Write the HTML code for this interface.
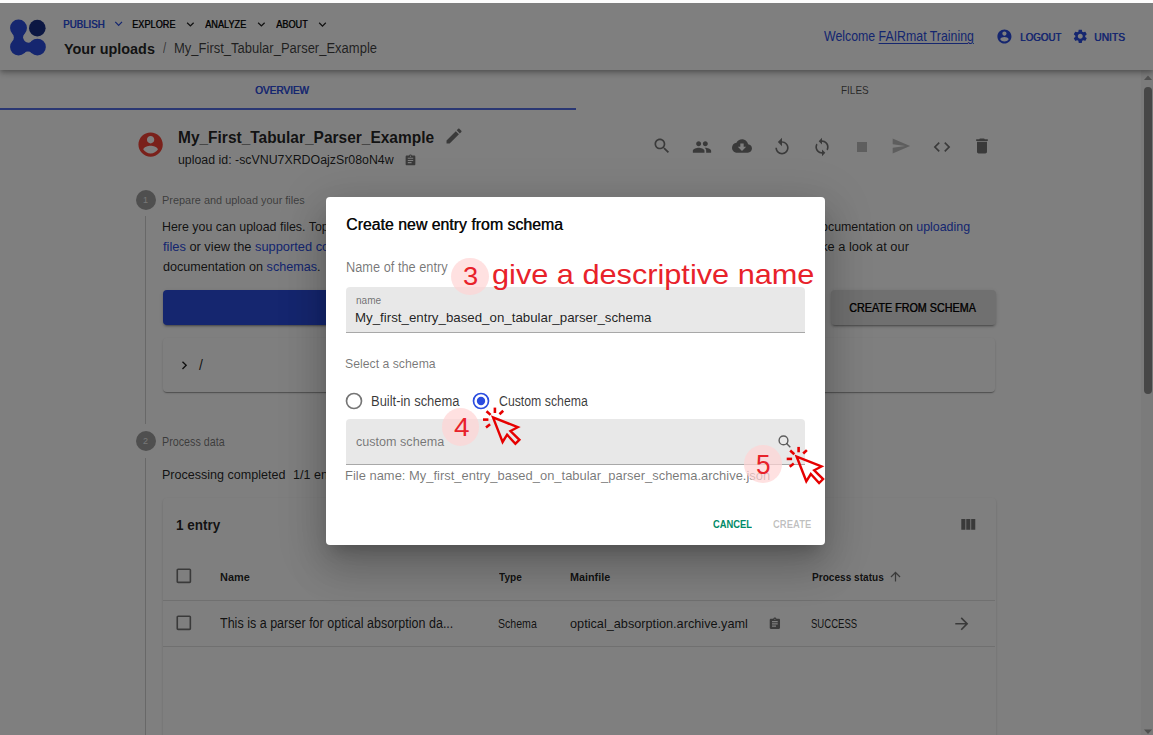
<!DOCTYPE html>
<html><head><meta charset="utf-8"><style>
html,body{margin:0;padding:0}
body{width:1153px;height:735px;overflow:hidden;position:relative;background:#fff;font-family:"Liberation Sans",sans-serif}
.t{position:absolute;white-space:nowrap;line-height:1;transform-origin:0 0}
.t a{color:#2A4CDF;text-decoration:none}
.t u{text-decoration:underline;text-underline-offset:1.5px;text-decoration-thickness:1px}
.r{position:absolute}
.ic{position:absolute;overflow:visible}
#hdr{position:absolute;left:0;top:0;width:1153px;height:70px;background:#fff;box-shadow:0px 2px 4px -1px rgba(0,0,0,0.2),0px 4px 5px 0px rgba(0,0,0,0.14),0px 1px 10px 0px rgba(0,0,0,0.12);z-index:1}
#hdr ~ *{z-index:2}
.stc{position:absolute;width:20px;height:20px;border-radius:50%;background:rgba(0,0,0,0.38);color:rgba(255,255,255,0.85);font-size:9px;line-height:21px;text-align:center}
.btn{border-radius:4px;box-shadow:0px 3px 1px -2px rgba(0,0,0,0.2),0px 2px 2px 0px rgba(0,0,0,0.14),0px 1px 5px 0px rgba(0,0,0,0.12)}
.paper{background:#fff;border-radius:4px;box-shadow:0px 2px 1px -1px rgba(0,0,0,0.2),0px 1px 1px 0px rgba(0,0,0,0.14),0px 1px 3px 0px rgba(0,0,0,0.12)}
#ov{position:absolute;left:0;top:0;width:1153px;height:735px;background:rgba(0,0,0,0.5);z-index:10}
#top{position:absolute;left:0;top:0;width:1153px;height:3px;background:#fcfcfc;z-index:11}
#modal{position:absolute;left:326px;top:197px;width:499px;height:348px;background:#fff;border-radius:4px;z-index:20;box-shadow:0px 11px 15px -7px rgba(0,0,0,0.2),0px 24px 38px 3px rgba(0,0,0,0.14),0px 9px 46px 8px rgba(0,0,0,0.12)}
.fld{position:absolute;background:rgba(0,0,0,0.09);border-top-left-radius:4px;border-top-right-radius:4px;box-sizing:border-box;border-bottom:1px solid rgba(0,0,0,0.28)}
#mt{}
.sb{position:absolute;z-index:12}
#ann{position:absolute;left:0;top:0;width:1153px;height:735px;z-index:30}
#ann > *{position:absolute}
</style></head><body>
<div id="page">
<div id="hdr"></div>
<svg class="ic" style="left:0;top:0;width:60px;height:70px" viewBox="0 0 60 70">
<rect x="12.3" y="33.7" width="12.4" height="7.7" fill="#2A4CDF"/>
<rect x="23.5" y="41.2" width="8.5" height="12" fill="#2A4CDF"/>
<circle cx="8.22" cy="37.55" r="5.63" fill="#fff"/>
<circle cx="28.5" cy="37.3" r="5.4" fill="#fff"/>
<circle cx="27.95" cy="56.6" r="5.0" fill="#fff"/>
<circle cx="18.5" cy="28" r="8.45" fill="#2A4CDF"/>
<circle cx="18.5" cy="47.1" r="8.45" fill="#2A4CDF"/>
<circle cx="37.4" cy="47.1" r="8.45" fill="#2A4CDF"/>
<circle cx="37.3" cy="28.15" r="8.3" fill="#192E86"/>
</svg>
<svg class="ic" style="left:111.11px;top:16.48px;width:15.27px;height:15.27px" viewBox="0 0 24 24"><path fill="#2A4CDF" d="M16.59 8.59L12 13.17 7.41 8.59 6 10l6 6 6-6z"/></svg>
<svg class="ic" style="left:183.11px;top:16.73px;width:14.77px;height:14.77px" viewBox="0 0 24 24"><path fill="rgba(0,0,0,0.87)" d="M16.59 8.59L12 13.17 7.41 8.59 6 10l6 6 6-6z"/></svg>
<svg class="ic" style="left:254.11px;top:16.73px;width:14.77px;height:14.77px" viewBox="0 0 24 24"><path fill="rgba(0,0,0,0.87)" d="M16.59 8.59L12 13.17 7.41 8.59 6 10l6 6 6-6z"/></svg>
<svg class="ic" style="left:314.71px;top:16.63px;width:14.97px;height:14.97px" viewBox="0 0 24 24"><path fill="rgba(0,0,0,0.87)" d="M16.59 8.59L12 13.17 7.41 8.59 6 10l6 6 6-6z"/></svg>
<svg class="ic" style="left:996.47px;top:28.02px;width:16.86px;height:16.86px" viewBox="0 0 24 24"><path fill="#2A4CDF" d="M12 2C6.48 2 2 6.48 2 12s4.48 10 10 10 10-4.48 10-10S17.52 2 12 2zm0 3c1.66 0 3 1.34 3 3s-1.34 3-3 3-3-1.34-3-3 1.34-3 3-3zm0 14.2c-2.5 0-4.71-1.28-6-3.22.03-1.99 4-3.08 6-3.08 1.99 0 5.97 1.09 6 3.08-1.29 1.94-3.5 3.22-6 3.22z"/></svg>
<svg class="ic" style="left:1071.67px;top:28.17px;width:16.56px;height:16.56px" viewBox="0 0 24 24"><path fill="#2A4CDF" d="M19.14 12.94c.04-.3.06-.61.06-.94 0-.32-.02-.64-.07-.94l2.03-1.58c.18-.14.23-.41.12-.61l-1.92-3.32c-.12-.22-.37-.29-.59-.22l-2.39.96c-.5-.38-1.03-.7-1.62-.94l-.36-2.54c-.04-.24-.24-.41-.48-.41h-3.84c-.24 0-.43.17-.47.41l-.36 2.54c-.59.24-1.13.57-1.62.94l-2.39-.96c-.22-.08-.47 0-.59.22L2.74 8.87c-.12.21-.08.47.12.61l2.03 1.58c-.05.3-.09.63-.09.94s.02.64.07.94l-2.03 1.58c-.18.14-.23.41-.12.61l1.92 3.32c.12.22.37.29.59.22l2.39-.96c.5.38 1.030.7 1.62.94l.36 2.54c.05.24.24.41.48.41h3.84c.24 0 .44-.17.47-.41l.36-2.54c.59-.24 1.13-.56 1.62-.94l2.39.96c.22.08.47 0 .59-.22l1.92-3.32c.12-.22.07-.47-.12-.61l-2.01-1.58zM12 15.6c-1.98 0-3.6-1.62-3.6-3.6s1.62-3.6 3.6-3.6 3.6 1.62 3.6 3.6-1.62 3.6-3.6 3.6z"/></svg>
<div class="r" style="left:0;top:108px;width:576px;height:2px;background:#546EE6"></div>
<svg class="ic" style="left:136.09px;top:130.04px;width:29.22px;height:29.22px" viewBox="0 0 24 24"><path fill="#f44336" d="M12 2C6.48 2 2 6.48 2 12s4.48 10 10 10 10-4.48 10-10S17.52 2 12 2zm0 3c1.66 0 3 1.34 3 3s-1.34 3-3 3-3-1.34-3-3 1.34-3 3-3zm0 14.2c-2.5 0-4.71-1.28-6-3.22.03-1.99 4-3.08 6-3.08 1.99 0 5.97 1.09 6 3.08-1.29 1.94-3.5 3.22-6 3.22z"/></svg>
<svg class="ic" style="left:443.53px;top:126.03px;width:20.13px;height:20.13px" viewBox="0 0 24 24"><path fill="rgba(0,0,0,0.54)" d="M3 17.25V21h3.75L17.81 9.94l-3.75-3.75L3 17.25zM20.71 7.04c.39-.39.39-1.02 0-1.41l-2.34-2.34c-.39-.39-1.02-.39-1.41 0l-1.83 1.83 3.75 3.75 1.83-1.83z"/></svg>
<svg class="ic" style="left:403.52px;top:153.51px;width:12.97px;height:12.97px" viewBox="0 0 24 24"><path fill="rgba(0,0,0,0.54)" d="M19 3h-4.18C14.4 1.84 13.3 1 12 1c-1.3 0-2.4.84-2.82 2H5c-1.1 0-2 .9-2 2v14c0 1.1.9 2 2 2h14c1.1 0 2-.9 2-2V5c0-1.1-.9-2-2-2zm-7 0c.55 0 1 .45 1 1s-.45 1-1 1-1-.45-1-1 .45-1 1-1zm2 14H7v-2h7v2zm3-4H7v-2h10v2zm0-4H7V7h10v2z"/></svg>
<svg class="ic" style="left:651.72px;top:136.32px;width:19.99px;height:19.99px" viewBox="0 0 24 24"><path fill="rgba(0,0,0,0.54)" d="M15.5 14h-.79l-.28-.27C15.41 12.59 16 11.11 16 9.5 16 5.91 13.09 3 9.5 3S3 5.91 3 9.5 5.91 16 9.5 16c1.61 0 3.09-.59 4.23-1.57l.27.28v.79l5 4.99L20.49 19l-4.99-5zm-6 0C7.01 14 5 11.99 5 9.5S7.01 5 9.5 5 14 7.01 14 9.5 11.99 14 9.5 14z"/></svg>
<svg class="ic" style="left:692.05px;top:136.50px;width:19.99px;height:19.99px" viewBox="0 0 24 24"><path fill="rgba(0,0,0,0.54)" d="M16 11c1.66 0 2.99-1.34 2.99-3S17.66 5 16 5c-1.66 0-3 1.34-3 3s1.34 3 3 3zm-8 0c1.66 0 2.99-1.34 2.99-3S9.66 5 8 5C6.34 5 5 6.34 5 8s1.34 3 3 3zm0 2c-2.33 0-7 1.17-7 3.5V19h14v-2.5c0-2.330-4.67-3.5-7-3.5zm8 0c-.29 0-.62.02-.97.05 1.16.84 1.97 1.97 1.97 3.45V19h6v-2.5c0-2.33-4.67-3.5-7-3.5z"/></svg>
<svg class="ic" style="left:732.10px;top:136.45px;width:19.99px;height:19.99px" viewBox="0 0 24 24"><path fill="rgba(0,0,0,0.54)" d="M19.35 10.04C18.67 6.59 15.64 4 12 4 9.11 4 6.6 5.64 5.35 8.04 2.34 8.36 0 10.91 0 14c0 3.31 2.69 6 6 6h13c2.76 0 5-2.24 5-5 0-2.64-2.05-4.78-4.65-4.96zM17 13l-5 5-5-5h3V9h4v4h3z"/></svg>
<svg class="ic" style="left:771.85px;top:136.69px;width:19.99px;height:19.99px" viewBox="0 0 24 24"><path fill="rgba(0,0,0,0.54)" d="M12 5V1L7 6l5 5V7c3.31 0 6 2.69 6 6s-2.69 6-6 6-6-2.69-6-6H4c0 4.42 3.58 8 8 8s8-3.58 8-8-3.58-8-8-8z"/></svg>
<svg class="ic" style="left:812.05px;top:136.75px;width:19.99px;height:19.99px" viewBox="0 0 24 24"><path fill="rgba(0,0,0,0.54)" d="M12 4V1L8 5l4 4V6c3.31 0 6 2.69 6 6 0 1.01-.25 1.97-.7 2.8l1.46 1.46C19.54 15.03 20 13.57 20 12c0-4.42-3.58-8-8-8zm0 14c-3.31 0-6-2.690-6-6 0-1.010.25-1.97.7-2.8L5.24 7.74C4.46 8.97 4 10.43 4 12c0 4.42 3.58 8 8 8v3l4-4-4-4v3z"/></svg>
<svg class="ic" style="left:852.00px;top:136.55px;width:19.99px;height:19.99px" viewBox="0 0 24 24"><path fill="rgba(0,0,0,0.26)" d="M6 6h12v12H6z"/></svg>
<svg class="ic" style="left:891.19px;top:136.05px;width:19.99px;height:19.99px" viewBox="0 0 24 24"><path fill="rgba(0,0,0,0.26)" d="M2.01 21L23 12 2.01 3 2 10l15 2-15 2z"/></svg>
<svg class="ic" style="left:932.00px;top:136.50px;width:19.99px;height:19.99px" viewBox="0 0 24 24"><path fill="rgba(0,0,0,0.54)" d="M9.4 16.6L4.8 12l4.6-4.6L8 6l-6 6 6 6 1.4-1.4zm5.2 0l4.6-4.6-4.6-4.6L16 6l6 6-6 6-1.4-1.4z"/></svg>
<svg class="ic" style="left:971.70px;top:136.25px;width:19.99px;height:19.99px" viewBox="0 0 24 24"><path fill="rgba(0,0,0,0.54)" d="M6 19c0 1.1.9 2 2 2h8c1.1 0 2-.9 2-2V7H6v12zM19 4h-3.5l-1-1h-5l-1 1H5v2h14V4z"/></svg>
<div class="r" style="left:145px;top:216px;width:1px;height:208px;background:#d0d0d0"></div>
<div class="r" style="left:145px;top:458px;width:1px;height:300px;background:#d0d0d0"></div>
<div class="stc" style="left:135.5px;top:189.9px">1</div>
<div class="stc" style="left:135.5px;top:431.1px">2</div>
<div class="r btn" style="left:163px;top:290px;width:659px;height:35px;background:#2A4CDF"></div>
<div class="r btn" style="left:830.5px;top:290px;width:165px;height:35px;background:#e0e0e0"></div>
<div class="r paper" style="left:163px;top:338px;width:832px;height:54px"></div>
<svg class="ic" style="left:175.72px;top:356.63px;width:16.74px;height:16.74px" viewBox="0 0 24 24"><path fill="rgba(0,0,0,0.87)" d="M10 6L8.59 7.41 13.17 12l-4.58 4.59L10 18l6-6z"/></svg>
<div class="t" style="left:199px;top:357.6px;font-size:14px;color:rgba(0,0,0,0.87)">/</div>
<div class="r paper" style="left:163px;top:498px;width:832.5px;height:300px"></div>
<svg class="ic" style="left:958.41px;top:514.93px;width:19.76px;height:19.76px" viewBox="0 0 24 24"><path fill="rgba(0,0,0,0.54)" d="M10 18h5V5h-5v13zm-6 0h5V5H4v13zM16 5v13h5V5h-5z"/></svg>
<svg class="ic" style="left:173.52px;top:565.97px;width:19.67px;height:19.67px" viewBox="0 0 24 24"><path fill="rgba(0,0,0,0.54)" d="M19 5v14H5V5h14m0-2H5c-1.1 0-2 .9-2 2v14c0 1.1.9 2 2 2h14c1.1 0 2-.9 2-2V5c0-1.1-.9-2-2-2z"/></svg>
<svg class="ic" style="left:173.55px;top:613.35px;width:19.60px;height:19.60px" viewBox="0 0 24 24"><path fill="rgba(0,0,0,0.54)" d="M19 5v14H5V5h14m0-2H5c-1.1 0-2 .9-2 2v14c0 1.1.9 2 2 2h14c1.1 0 2-.9 2-2V5c0-1.1-.9-2-2-2z"/></svg>
<svg class="ic" style="left:887.80px;top:569.30px;width:15.00px;height:15.00px" viewBox="0 0 24 24"><path fill="rgba(0,0,0,0.54)" d="M4 12l1.41 1.41L11 7.83V20h2V7.83l5.58 5.59L20 12l-8-8-8 8z"/></svg>
<svg class="ic" style="left:767.93px;top:617.15px;width:13.74px;height:13.74px" viewBox="0 0 24 24"><path fill="rgba(0,0,0,0.54)" d="M19 3h-4.18C14.4 1.84 13.3 1 12 1c-1.3 0-2.4.84-2.82 2H5c-1.1 0-2 .9-2 2v14c0 1.1.9 2 2 2h14c1.1 0 2-.9 2-2V5c0-1.1-.9-2-2-2zm-7 0c.55 0 1 .45 1 1s-.45 1-1 1-1-.45-1-1 .45-1 1-1zm2 14H7v-2h7v2zm3-4H7v-2h10v2zm0-4H7V7h10v2z"/></svg>
<svg class="ic" style="left:951.61px;top:613.86px;width:19.58px;height:19.58px" viewBox="0 0 24 24"><path fill="rgba(0,0,0,0.54)" d="M12 4l-1.41 1.41L16.17 11H4v2h12.17l-5.58 5.59L12 20l8-8z"/></svg>
<div class="r" style="left:163px;top:600px;width:832px;height:1px;background:#e0e0e0"></div>
<div class="r" style="left:163px;top:646px;width:832px;height:1px;background:#e0e0e0"></div>
<div class="t" id="nav1" style="left:62.90px;top:18.68px;font-size:10.72px;font-weight:normal;color:#2A4CDF;text-shadow:0.6px 0 0 #2A4CDF;transform:scaleX(0.9022)">PUBLISH</div>
<div class="t" id="nav2" style="left:132.45px;top:18.68px;font-size:10.72px;font-weight:normal;color:rgba(0,0,0,0.87);text-shadow:0.6px 0 0 rgba(0,0,0,0.87);transform:scaleX(0.8540)">EXPLORE</div>
<div class="t" id="nav3" style="left:205.00px;top:18.68px;font-size:10.72px;font-weight:normal;color:rgba(0,0,0,0.87);text-shadow:0.6px 0 0 rgba(0,0,0,0.87);transform:scaleX(0.8531)">ANALYZE</div>
<div class="t" id="nav4" style="left:275.50px;top:18.68px;font-size:10.72px;font-weight:normal;color:rgba(0,0,0,0.87);text-shadow:0.6px 0 0 rgba(0,0,0,0.87);transform:scaleX(0.8553)">ABOUT</div>
<div class="t" id="yu" style="left:64.40px;top:40.79px;font-size:15.07px;font-weight:bold;color:rgba(0,0,0,0.87);transform:scaleX(0.9558)">Your uploads</div>
<div class="t" id="sl" style="left:162.90px;top:42.27px;font-size:13.91px;font-weight:normal;color:rgba(0,0,0,0.6);transform:scaleX(0.8250)">/</div>
<div class="t" id="bc" style="left:173.67px;top:41.97px;font-size:13.91px;font-weight:normal;color:rgba(0,0,0,0.75);transform:scaleX(0.9347)">My_First_Tabular_Parser_Example</div>
<div class="t" id="wel" style="left:823.60px;top:28.83px;font-size:14.20px;font-weight:normal;color:#2A4CDF;transform:scaleX(0.8692)">Welcome <u>FAIRmat Training</u></div>
<div class="t" id="lo" style="left:1019.70px;top:31.96px;font-size:10.87px;font-weight:normal;color:#2A4CDF;text-shadow:0.6px 0 0 #2A4CDF;transform:scaleX(0.8978)">LOGOUT</div>
<div class="t" id="un" style="left:1094.46px;top:31.96px;font-size:10.87px;font-weight:normal;color:#2A4CDF;text-shadow:0.6px 0 0 #2A4CDF;transform:scaleX(0.9437)">UNITS</div>
<div class="t" id="tab1" style="left:255.30px;top:84.94px;font-size:11.59px;font-weight:normal;color:#2A4CDF;text-shadow:0.6px 0 0 #2A4CDF;transform:scaleX(0.8651)">OVERVIEW</div>
<div class="t" id="tab2" style="left:840.82px;top:84.99px;font-size:11.30px;font-weight:normal;color:rgba(0,0,0,0.7);transform:scaleX(0.8833)">FILES</div>
<div class="t" id="ttl" style="left:177.84px;top:129.33px;font-size:16.09px;font-weight:bold;color:rgba(0,0,0,0.87);transform:scaleX(0.9626)">My_First_Tabular_Parser_Example</div>
<div class="t" id="uid" style="left:177.87px;top:153.11px;font-size:13.29px;font-weight:normal;color:rgba(0,0,0,0.87);transform:scaleX(0.9303)">upload id: -scVNU7XRDOajzSr08oN4w</div>
<div class="t" id="s1" style="left:161.58px;top:194.58px;font-size:10.72px;font-weight:normal;color:rgba(0,0,0,0.54);transform:scaleX(1.0194)">Prepare and upload your files</div>
<div class="t" id="b1" style="left:161.65px;top:219.91px;font-size:13.04px;font-weight:normal;color:rgba(0,0,0,0.87);transform:scaleX(0.9523)">Here you can upload files. Top-level .zip or .tar files will be extracted</div>
<div class="t" id="b1r" style="left:761.45px;top:219.91px;font-size:13.04px;font-weight:normal;color:rgba(0,0,0,0.87);transform:scaleX(0.9523)">. See the documentation on <a>uploading</a></div>
<div class="t" id="b2" style="left:162.60px;top:240.85px;font-size:12.88px;font-weight:normal;color:rgba(0,0,0,0.87);transform:scaleX(0.9966)"><a>files</a> or view the <a>supported codes</a>. Or create entries</div>
<div class="t" id="b2r" style="left:558.20px;top:240.85px;font-size:12.88px;font-weight:normal;color:rgba(0,0,0,0.87);transform:scaleX(0.9966)">You can also create entries from a schema. Take a look at our</div>
<div class="t" id="b3" style="left:162.60px;top:259.67px;font-size:13.56px;font-weight:normal;color:rgba(0,0,0,0.87);transform:scaleX(0.9296)">documentation on <a>schemas</a>.</div>
<div class="t" id="cfs" style="left:849.40px;top:301.61px;font-size:12.46px;font-weight:normal;color:rgba(0,0,0,0.87);text-shadow:0.6px 0 0 rgba(0,0,0,0.87);transform:scaleX(0.8646)">CREATE FROM SCHEMA</div>
<div class="t" id="s2" style="left:161.70px;top:436.70px;font-size:11.88px;font-weight:normal;color:rgba(0,0,0,0.54);transform:scaleX(0.9043)">Process data</div>
<div class="t" id="pc" style="left:161.64px;top:467.71px;font-size:13.04px;font-weight:normal;color:rgba(0,0,0,0.87);transform:scaleX(0.9630)">Processing completed</div>
<div class="t" id="pc2" style="left:293.04px;top:467.71px;font-size:13.04px;font-weight:normal;color:rgba(0,0,0,0.87);transform:scaleX(0.9630)">1/1 entries processed</div>
<div class="t" id="ent" style="left:176.11px;top:516.67px;font-size:15.22px;font-weight:bold;color:rgba(0,0,0,0.87);transform:scaleX(0.8878)">1 entry</div>
<div class="t" id="thn" style="left:219.80px;top:571.74px;font-size:11.59px;font-weight:bold;color:rgba(0,0,0,0.87);transform:scaleX(0.9419)">Name</div>
<div class="t" id="tht" style="left:499.00px;top:571.74px;font-size:11.59px;font-weight:bold;color:rgba(0,0,0,0.87);transform:scaleX(0.8692)">Type</div>
<div class="t" id="thm" style="left:569.70px;top:571.74px;font-size:11.59px;font-weight:bold;color:rgba(0,0,0,0.87);transform:scaleX(0.9326)">Mainfile</div>
<div class="t" id="thp" style="left:811.50px;top:571.74px;font-size:11.59px;font-weight:bold;color:rgba(0,0,0,0.87);transform:scaleX(0.8720)">Process status</div>
<div class="t" id="r1" style="left:219.80px;top:615.56px;font-size:14.64px;font-weight:normal;color:rgba(0,0,0,0.87);transform:scaleX(0.8568)">This is a parser for optical absorption da...</div>
<div class="t" id="r2" style="left:498.11px;top:618.70px;font-size:11.88px;font-weight:normal;color:rgba(0,0,0,0.87);transform:scaleX(0.8907)">Schema</div>
<div class="t" id="r3" style="left:569.70px;top:616.94px;font-size:13.01px;font-weight:normal;color:rgba(0,0,0,0.87);transform:scaleX(0.9769)">optical_absorption.archive.yaml</div>
<div class="t" id="r4" style="left:810.70px;top:618.70px;font-size:11.88px;font-weight:normal;color:rgba(0,0,0,0.87);transform:scaleX(0.8036)">SUCCESS</div>
</div>
<div id="ov"></div>
<div id="top"></div>
<div class="sb" style="left:1141px;top:70px;width:12px;height:665px;background:rgba(0,0,0,0.03)"></div>
<svg class="sb" style="left:1143px;top:74px;width:10px;height:7px" viewBox="0 0 10 7"><path d="M1 6L5 1.5L9 6Z" fill="#505050"/></svg>
<div class="sb" style="left:1144px;top:86.5px;width:8px;height:307px;border-radius:4px;background:#474747"></div>
<svg class="sb" style="left:1143px;top:728px;width:10px;height:7px" viewBox="0 0 10 7"><path d="M1 1.5L5 6L9 1.5Z" fill="#505050"/></svg>
<div id="modal">
<div class="fld" style="left:20px;top:90px;width:459.4px;height:45.5px"></div>
<div class="fld" style="left:19.7px;top:221.5px;width:459.5px;height:46px"></div>
<svg class="ic" style="left:18px;top:193.7px;width:20px;height:20px" viewBox="0 0 24 24"><circle cx="12" cy="12" r="9" fill="none" stroke="rgba(0,0,0,0.54)" stroke-width="2"/></svg>
<svg class="ic" style="left:145px;top:193.7px;width:20px;height:20px" viewBox="0 0 24 24"><circle cx="12" cy="12" r="9" fill="none" stroke="#2A4CDF" stroke-width="2"/><circle cx="12" cy="12" r="5" fill="#2A4CDF"/></svg>
<svg class="ic" style="left:450px;top:236px;width:20px;height:20px" viewBox="0 0 20 20"><circle cx="7.5" cy="7.4" r="4.4" fill="none" stroke="rgba(0,0,0,0.6)" stroke-width="1.4"/><path d="M10.6 10.6L14.3 14.3" stroke="rgba(0,0,0,0.6)" stroke-width="1.4"/></svg>
</div>
<div id="ann">
<div class="t" id="mt" style="left:345.68px;top:216.04px;font-size:17.25px;font-weight:normal;color:rgba(0,0,0,0.87);text-shadow:0.6px 0 0 rgba(0,0,0,0.87);transform:scaleX(0.9191)">Create new entry from schema</div>
<div class="t" id="mn" style="left:345.71px;top:260.00px;font-size:14.35px;font-weight:normal;color:rgba(0,0,0,0.54);transform:scaleX(0.8920)">Name of the entry</div>
<div class="t" id="ml" style="left:355.60px;top:295.02px;font-size:11.51px;font-weight:normal;color:rgba(0,0,0,0.54);transform:scaleX(0.8759)">name</div>
<div class="t" id="mv" style="left:354.58px;top:311.31px;font-size:13.04px;font-weight:normal;color:rgba(0,0,0,0.87);transform:scaleX(1.0203)">My_first_entry_based_on_tabular_parser_schema</div>
<div class="t" id="ms" style="left:344.88px;top:357.27px;font-size:13.33px;font-weight:normal;color:rgba(0,0,0,0.54);transform:scaleX(0.9204)">Select a schema</div>
<div class="t" id="rb1" style="left:371.27px;top:394.57px;font-size:13.91px;font-weight:normal;color:rgba(0,0,0,0.78);transform:scaleX(0.9309)">Built-in schema</div>
<div class="t" id="rb2" style="left:499.30px;top:394.57px;font-size:13.91px;font-weight:normal;color:rgba(0,0,0,0.78);transform:scaleX(0.8842)">Custom schema</div>
<div class="t" id="cs" style="left:355.80px;top:436.05px;font-size:12.88px;font-weight:normal;color:rgba(0,0,0,0.5);transform:scaleX(0.9778)">custom schema</div>
<div class="t" id="fn" style="left:344.71px;top:469.01px;font-size:13.04px;font-weight:normal;color:rgba(0,0,0,0.54);transform:scaleX(0.9932)">File name: My_first_entry_based_on_tabular_parser_schema.archive.json</div>
<div class="t" id="can" style="left:712.80px;top:517.82px;font-size:11.74px;font-weight:bold;color:#008A67;transform:scaleX(0.7959)">CANCEL</div>
<div class="t" id="cre" style="left:773.00px;top:517.82px;font-size:11.74px;font-weight:bold;color:rgba(0,0,0,0.26);transform:scaleX(0.8085)">CREATE</div>
<div class="r" style="left:451.25px;top:257.75px;width:37.5px;height:37.5px;border-radius:50%;background:rgba(255,212,212,0.7)"></div>
<div class="r" style="left:441.85px;top:408.25px;width:37.5px;height:37.5px;border-radius:50%;background:rgba(255,212,212,0.7)"></div>
<div class="r" style="left:744.35px;top:445.25px;width:37.5px;height:37.5px;border-radius:50%;background:rgba(255,212,212,0.7)"></div>
<div class="t" id="a3" style="left:462.54px;top:263.54px;font-size:25.71px;font-weight:normal;color:#e8222a;transform:scaleX(1.0615)">3</div>
<div class="t" id="a4" style="left:453.50px;top:414.64px;font-size:25.71px;font-weight:normal;color:#e8222a;transform:scaleX(1.0857)">4</div>
<div class="t" id="a5" style="left:756.06px;top:450.64px;font-size:27.71px;font-weight:normal;color:#e8222a;transform:scaleX(0.9429)">5</div>
<div class="t" id="an" style="left:491.70px;top:261.36px;font-size:27.81px;font-weight:normal;color:#e8222a;transform:scaleX(1.1041)">give a descriptive name</div>
<svg class="ic" style="left:0;top:0;width:1153px;height:735px" viewBox="0 0 1153 735"><g transform="translate(493,417.4)"><path d="M0 0 L9.6 24.6 L14.1 17.3 L22.4 26.3 L26.4 22.4 L17.5 13.6 L24.8 9.8 Z" fill="none" stroke="#e60000" stroke-width="2.4" stroke-linejoin="miter"/><g stroke="#e60000" stroke-width="2.6" stroke-linecap="butt"><path d="M1.9 -9.8V-4.4"/><path d="M-6.5 -6.2L-2.4 -2.5"/><path d="M10.2 -6.6L6.5 -3.2"/><path d="M-10 2.2H-4.6"/><path d="M-7 10L-2.9 6.8"/></g></g><g transform="translate(796.7,456.7)"><path d="M0 0 L9.6 24.6 L14.1 17.3 L22.4 26.3 L26.4 22.4 L17.5 13.6 L24.8 9.8 Z" fill="none" stroke="#e60000" stroke-width="2.4" stroke-linejoin="miter"/><g stroke="#e60000" stroke-width="2.6" stroke-linecap="butt"><path d="M1.9 -9.8V-4.4"/><path d="M-6.5 -6.2L-2.4 -2.5"/><path d="M10.2 -6.6L6.5 -3.2"/><path d="M-10 2.2H-4.6"/><path d="M-7 10L-2.9 6.8"/></g></g></svg>
</div>
</body></html>
